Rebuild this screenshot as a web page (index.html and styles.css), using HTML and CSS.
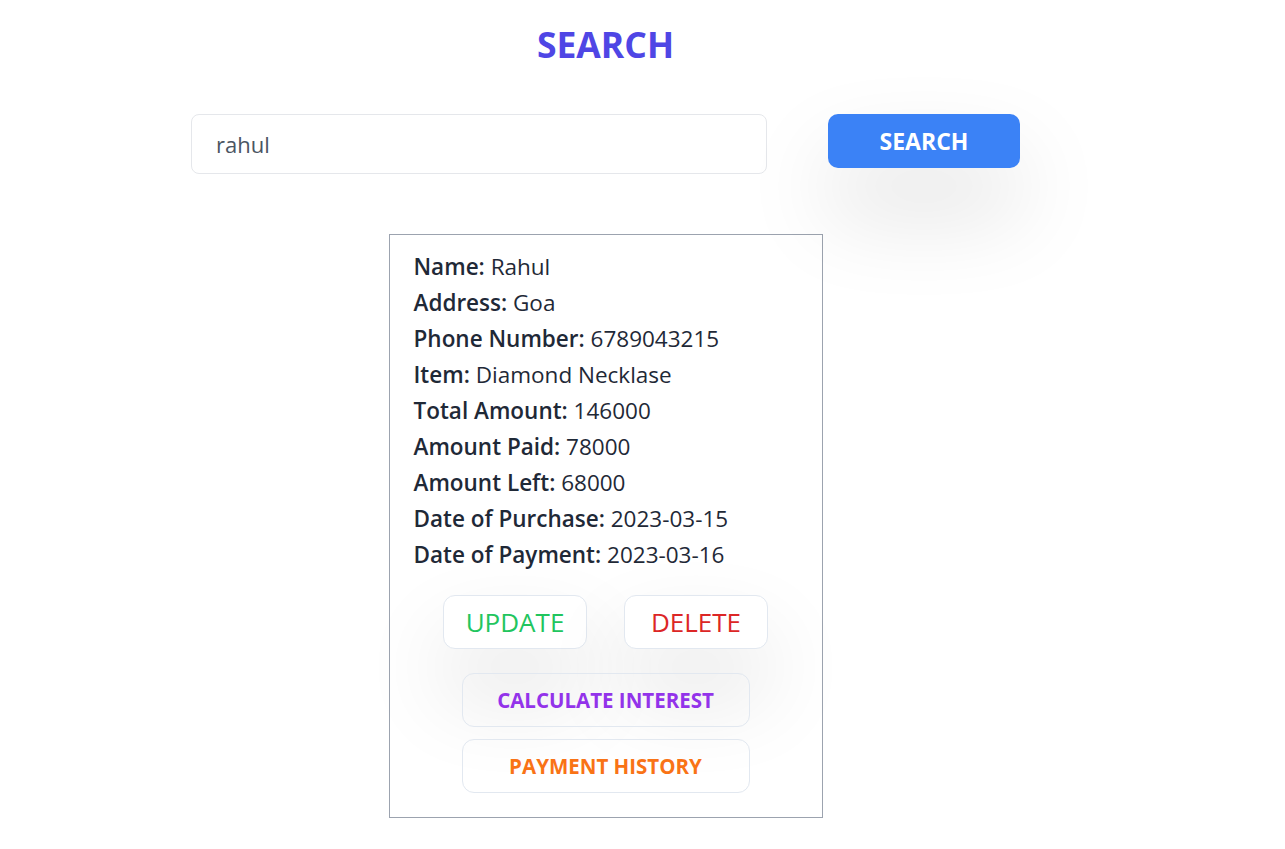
FILE: index.html
```html
<!DOCTYPE html>
<html>
<head>
<meta charset="utf-8">
<link rel="stylesheet" href="styles.css">
</head>
<body>
<main class="page">
  <h1 class="title">SEARCH</h1>
  <div class="search-row">
    <input class="search-input" type="text" value="rahul">
    <button class="search-btn">SEARCH</button>
  </div>
  <section class="card">
    <p class="line"><b>Name:</b> Rahul</p>
    <p class="line"><b>Address:</b> Goa</p>
    <p class="line"><b>Phone Number:</b> 6789043215</p>
    <p class="line"><b>Item:</b> Diamond Necklase</p>
    <p class="line"><b>Total Amount:</b> 146000</p>
    <p class="line"><b>Amount Paid:</b> 78000</p>
    <p class="line"><b>Amount Left:</b> 68000</p>
    <p class="line"><b>Date of Purchase:</b> 2023-03-15</p>
    <p class="line"><b>Date of Payment:</b> 2023-03-16</p>
    <div class="actions">
      <button class="btn btn-update">UPDATE</button>
      <button class="btn btn-delete">DELETE</button>
    </div>
    <div class="wide-actions">
      <button class="btn-wide btn-interest">CALCULATE INTEREST</button>
      <button class="btn-wide btn-history">PAYMENT HISTORY</button>
    </div>
  </section>
</main>
</body>
</html>
```

FILE: styles.css
```css
* { box-sizing: border-box; }
body {
  margin: 0;
  background: #ffffff;
  font-family: "Open Sans", "Noto Sans", sans-serif;
  color: #1f2937;
}
.page {
  width: 1211px;
  padding-top: 24px;
}
.title {
  margin: 0;
  text-align: center;
  font-size: 35.5px;
  line-height: 40px;
  font-weight: 700;
  color: #4f46e5;
}
.search-row {
  display: flex;
  justify-content: center;
  align-items: flex-start;
  gap: 61px;
  margin-top: 50px;
}
.search-input {
  width: 576px;
  height: 60px;
  border: 1px solid #e5e7eb;
  border-radius: 8px;
  padding: 0 24px;
  font-family: inherit;
  font-size: 22px;
  color: #4b5563;
  outline: none;
}
.search-btn {
  width: 192px;
  height: 54px;
  border: none;
  border-radius: 10px;
  background: #3b82f6;
  color: #ffffff;
  font-family: inherit;
  font-size: 23px;
  font-weight: 700;
  box-shadow: 0 45px 90px rgba(0, 0, 0, 0.13);
}
.card {
  width: 434px;
  margin: 60px auto 0;
  border: 1px solid #9ca3af;
  padding: 14px 24px 24px;
}
.line {
  margin: 0;
  font-size: 22.5px;
  line-height: 36px;
  color: #1f2937;
}
.line b { font-weight: 600; }
.actions {
  display: flex;
  justify-content: center;
  gap: 37px;
  margin-top: 22px;
}
.btn {
  width: 144px;
  height: 54px;
  border: 1px solid #e2e8f0;
  border-radius: 12px;
  background: #ffffff;
  font-family: inherit;
  font-size: 26px;
  font-weight: 400;
  box-shadow: 0 45px 90px rgba(0, 0, 0, 0.12);
}
.btn-update { color: #22c55e; }
.btn-delete { color: #dc2626; }
.wide-actions {
  display: flex;
  flex-direction: column;
  align-items: center;
  gap: 12px;
  margin-top: 24px;
}
.btn-wide {
  width: 288px;
  height: 54px;
  border: 1px solid #e2e8f0;
  border-radius: 12px;
  background: transparent;
  font-family: inherit;
  font-size: 20.5px;
  font-weight: 700;
}
.btn-interest { color: #9333ea; }
.btn-history { color: #f97316; }
```
